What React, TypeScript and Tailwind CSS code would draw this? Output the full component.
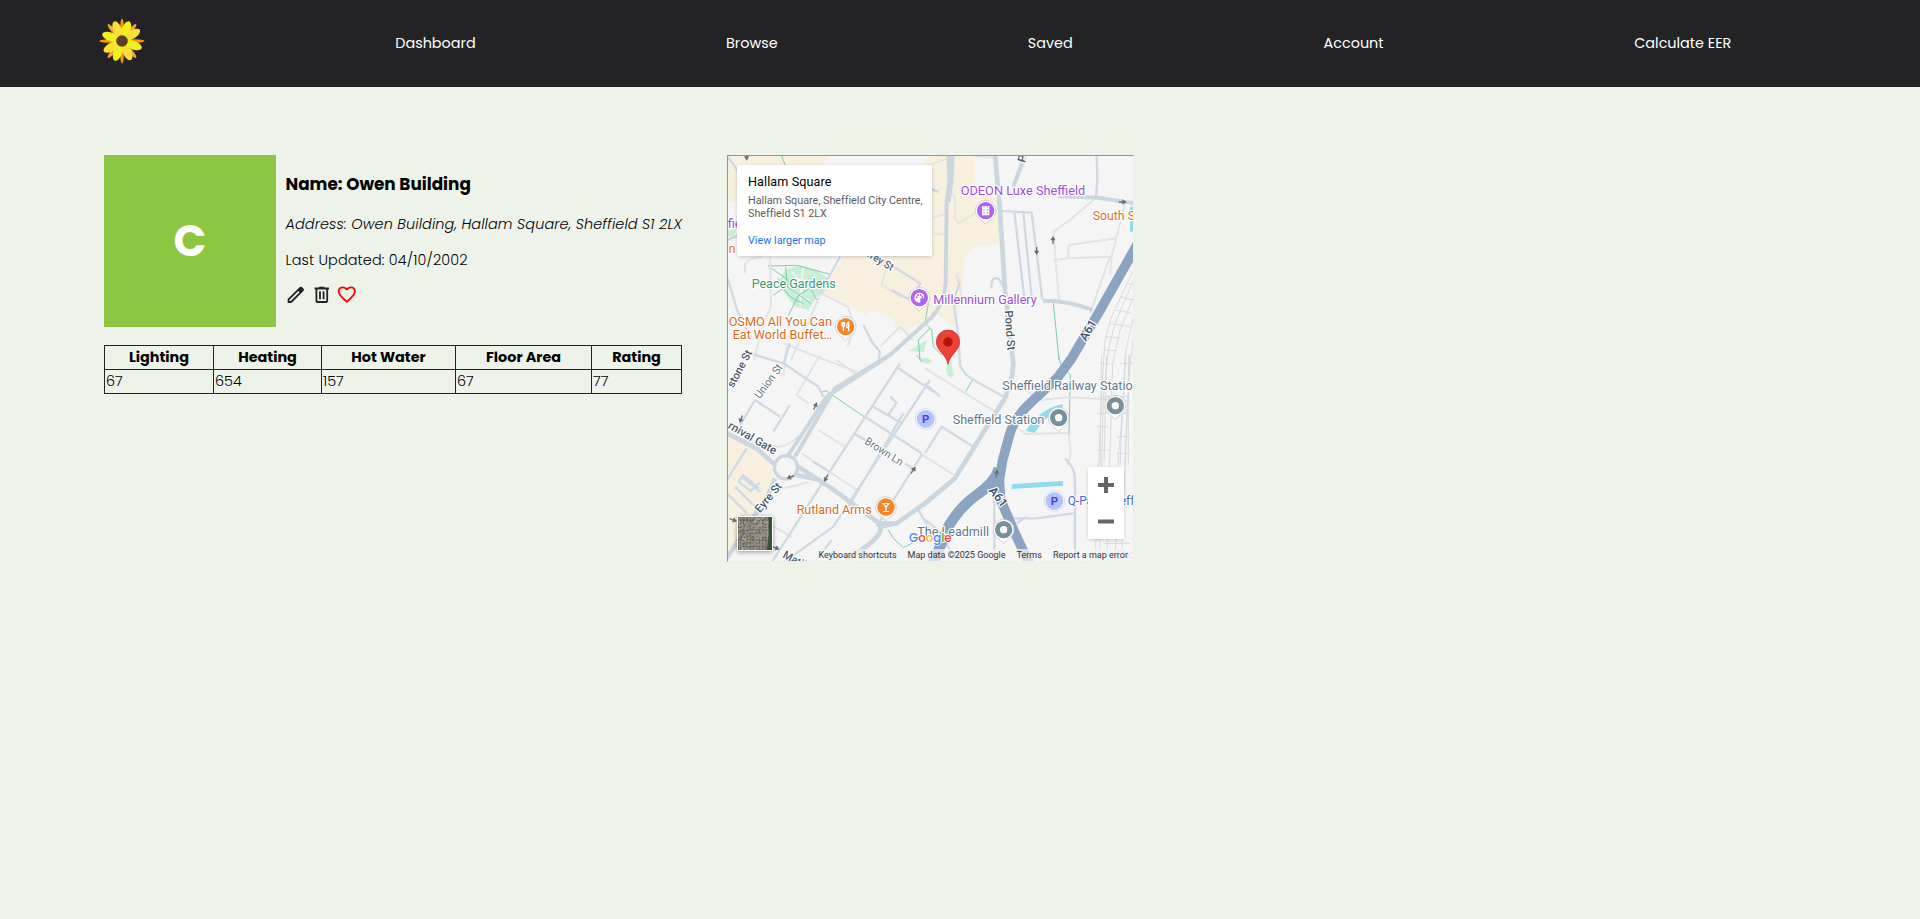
import React from 'react';

const EDIT =
  'M200-200h57l391-391-57-57-391 391v57Zm-80 80v-170l528-527q12-11 26.5-17t30.5-6q16 0 31 6t26 18l55 56q12 11 17.5 26t5.5 30q0 16-5.5 30.5T817-647L290-120H120Zm640-584-56-56 56 56Zm-141 85-28-29 57 57-29-28Z';
const TRASH =
  'M280-120q-33 0-56.5-23.5T200-200v-520h-40v-80h200v-40h240v40h200v80h-40v520q0 33-23.5 56.5T680-120H280Zm400-600H280v520h400v-520ZM360-280h80v-360h-80v360Zm160 0h80v-360h-80v360ZM280-720v520-520Z';
const HEART =
  'm480-120-58-52q-101-91-167-157T150-447.5Q111-500 95.5-544T80-634q0-94 63-157t157-63q52 0 99 22t81 62q34-40 81-62t99-22q94 0 157 63t63 157q0 46-15.5 90T810-447.5Q771-395 705-329T538-172l-58 52Zm0-108q96-86 158-147.5t98-107q36-45.5 50-81t14-70.5q0-60-40-100t-100-40q-47 0-87 26.5T518-680h-76q-15-41-55-67.5T300-774q-60 0-100 40t-40 100q0 35 14 70.5t50 81q36 45.5 98 107T480-228Z';

function Icon({ d, color }: { d: string; color: string }) {
  return (
    <svg viewBox="0 -960 960 960" className="h-[21.6px] w-[21.6px]" fill={color}>
      <path d={d} />
    </svg>
  );
}

function Flower() {
  return (
    <svg viewBox="-23 -23 46 46" className="block h-[46px] w-[46px]">
      {[40, 140, 220, 320].map((a) => (
        <ellipse key={a} cx="0" cy="-14.500" rx="2" ry="7.500" fill="#f7a03c" transform={`rotate(${a})`} />
      ))}
      {[0, 90, 180, 270].map((a) => (
        <ellipse key={a} cx="0" cy="-13" rx="1.800" ry="9.500" fill="#ff9500" transform={`rotate(${a})`} />
      ))}
      {[20, 65, 110, 155, 200, 245, 290, 335].map((a, i) => (
        <ellipse
          key={a}
          cx="0"
          cy="-12"
          rx="4.300"
          ry="9"
          fill={[1, 3, 5, 7].includes(i) ? '#fddf35' : '#f1f01e'}
          transform={`rotate(${[20, 58, 110, 155, 200, 240, 290, 338][i]})`}
        />
      ))}
      <circle r="5.800" fill="#5b4022" />
    </svg>
  );
}

const LINKS = [
  { label: 'Dashboard', cls: 'w-20' },
  { label: 'Browse', cls: 'w-[51px]' },
  { label: 'Saved', cls: 'w-[45px]' },
  { label: 'Account', cls: 'w-[60px]' },
  { label: 'Calculate EER', cls: 'w-[97px]' },
];

const COLUMNS = [
  { name: 'Lighting', value: '67', cls: 'w-[109px]' },
  { name: 'Heating', value: '654', cls: 'w-[108px]' },
  { name: 'Hot Water', value: '157', cls: 'w-[134px]' },
  { name: 'Floor Area', value: '67', cls: 'w-[136px]' },
  { name: 'Rating', value: '77', cls: 'w-[90px]' },
];

function Pin({ x, y, fill, children }: { x: number; y: number; fill: string; children?: React.ReactNode }) {
  return (
    <g transform={`translate(${x} ${y})`}>
      <path d="M-31 0a31 31 0 1 1 62 0c0 16-12 25-20 31l-11 10-11-10c-8-6-20-15-20-31z" fill="#fff" stroke="#b9bec4" strokeWidth="2" />
      <circle r="26" fill={fill} />
      {children}
    </g>
  );
}

function Label({ x, y, fill, size = 38, len, rotate = 0, weight = 400, children }: {
  x: number; y: number; fill: string; size?: number; len: number; rotate?: number; weight?: number; children: string;
}) {
  return (
    <text
      transform={`translate(${x} ${y}) rotate(${rotate})`}
      fill={fill}
      fontSize={size}
      fontWeight={weight}
      textLength={len}
      lengthAdjust="spacingAndGlyphs"
      stroke="#fff"
      strokeWidth="7"
      strokeLinejoin="round"
      paintOrder="stroke"
    >
      {children}
    </text>
  );
}

const ARROWS = [
  [950, 303, 180], [999, 270, 0], [1208, 156, 90], [286, 768, 25], [63, 808, 200], [211, 981, 250],
  [318, 985, 210], [580, 960, 35], [40, 1110, 110], [168, 1194, 110], [830, 970, 10], [80, 20, 180],
];

function MapDrawing() {
  return (
    <svg viewBox="21 15 1221 1221" className="absolute inset-0 h-full w-full font-['Roboto','Noto_Sans',sans-serif]">
      <rect x="0" y="0" width="1260" height="1260" fill="#f5f5f5" />
      <g fill="#f8f0df">
        <path d="M21 15H330L300 60 50 160 21 155z" />
        <path d="M380 310 630 15H763L765 110 835 150 843 280 755 295 733 330 727 420 702 530 636 485 610 520 535 548 518 508 455 480 440 496 303 430z" />
        <path d="M21 850 110 895 160 960 150 1020 110 1080 60 1140 40 1190 21 1200z" />
      </g>
      <g fill="#c7efd6">
        <path d="M195 360 240 345 290 360 325 385 315 425 290 440 265 480 225 470 195 430 175 400z" />
        <path d="M567 603 620 570 612 605z" />
        <path d="M600 625q30-5 35 10l-10 8-25-8z" />
        <path d="M683 640q12-30 12 10l7 22q-5 20-17 5-12-15-2-37z" />
        <path d="M21 240 50 238 40 260 21 258z" />
      </g>
      <g fill="none" stroke="#f5f5f5" strokeWidth="5">
        <path d="M200 400q40 50 70 50M215 365q30 40 70 40M250 345l-10 125" />
      </g>
      <g fill="none" stroke="#80cdb0" strokeWidth="3">
        <path d="M145 348l85-2 97 26M145 348l60 42 30 20M160 436l50-36M205 497l30-60 30-20M197 350l5 60 70 50M275 420l15 30M175 385q20 60 75 75" />
        <path d="M625 460l-10 60 20 20 5 50 25 25M600 630l-5-60 35-35M1000 458l17 172M1015 615l8 30 28 30-4 180M305 727q15-8 20 0l110 75M505 1140l15 25 30 28 30-15M737 725l22-38M590 615l15 20M185 18l12 30" />
      </g>
      <g fill="none" stroke="#e2e3e4" strokeWidth="6" strokeLinejoin="round">
        <path d="M75 370V345q5-20 50-24M150 320l3 150-30 70-20 90M303 430l-90 200M303 430l80 40 20 60-20 60M190 580l100 40 120 45M200 590l-10 90M300 615l-70 120 35 25M350 630l60 45M295 840l80 50M245 910l165 110M160 890q40 5 75-30M180 1015q50-5 85-20M160 1130l55 30" />
        <path d="M1120 150 1050 210 1000 245 1017 450M1045 285l145-20M1045 285v40l125-5-60 170M1000 330l45-5M1215 160l-40 160-5 55M615 655l210 130M890 700l70 50 85-8 185 10M897 835l20 17 130-3M1047 855l5 60-10 30M730 460l-20-90M480 590l60-60 40 40M600 910l110 70" />
      </g>
      <g fill="none" stroke="#dfe2e6" strokeWidth="4">
        <path d="M500 350l-15 55 60 38M690 130q15 0 15 20v55l10 15 50-30M615 50l70-25M640 250l40 5M620 210l60-20M763 18l60 5" />
      </g>
      <g fill="none" stroke="#d0dae4" strokeWidth="7" strokeLinejoin="round">
        <path d="M21 18q50 60 60 120l-15 100M21 380l30 100 45 90M360 320l-60 110M480 325l120 75q-15 50-40 45l-45-25M430 525l25 50 25 30-5 30" />
        <path d="M90 610l100 30 105 70 15 30M190 640l20-60M105 750 60 825M105 750l75 50M210 765l-50 80M21 990 80 895M95 1020l25-22M55 995l40 30M55 995l15-20 45 40M21 1030l60 60M45 1010l60 60M65 980l55 45" />
        <path d="M540 640 300 1010 150 1245M535 655l105 70M550 790 380 1080M435 800l170 110M400 850l45 25M555 940l30 20M460 770l85 50M505 795l25-37-20-18M280 935l45 28M630 690 340 1130 180 1245M605 915 470 1130M595 1080l35 60M275 1250l60-80" />
        <path d="M845 183l90 5 32 260M883 186l30 260M910 188l25 255M615 910l50-80 95 60M615 700l45 40M720 395l-20 60 15 100 5 90q10 30 50 50l90 50M1035 925q30 30 30 60v270M880 1105h70l110-15M823 1040v200M890 1120l30-20M615 1110q40 20 80 100" />
        <path d="M1130 18l2 65-4 58M813 415l4-25q15-15 26 8l15 25" />
      </g>
      <g fill="none" stroke="#cbd6df" strokeLinejoin="round">
        <g strokeWidth="14">
          <path d="M685 15l3 80-8 60-3 245q-5 60-40 100L510 615 345 715 225 920M698 15l-4 80-8 60" strokeWidth="12" />
          <path d="M500 622 320 740 205 915" strokeWidth="12" />
          <path d="M825 15l15 165 15 240 20 180 5 40-3 35-22 70-70 110-80 130-90 75-85 60-50 10" />
          <path d="M21 850 110 895 165 945M235 950l100 65 150 110M165 985l-20 50-60 90-65 100M230 975l70 15M470 1120h60M480 1125q10 30-50 70l-70 50" />
          <path d="M1015 138l120 5 105 17M968 452q80 0 150 28M915 15l-35 95" strokeWidth="12" />
          <path d="M21 270l50-20M615 110l40 15" strokeWidth="8" />
        </g>
        <circle cx="198" cy="952" r="35" fill="#f5f5f5" strokeWidth="10" />
      </g>
      <g fill="none" stroke="#d7dbdf" strokeWidth="3">
        <path d="M1238 365 1175 500 1155 570 1145 720 1125 1245M1239 395 1185 520 1165 600 1150 740 1138 1245M1245 430 1200 540 1178 640 1160 1245M1245 480 1218 600 1210 760 1195 920 1185 1245M1245 530 1230 640 1220 800 1205 1245M1145 615l-5 330M1160 615l-8 320M1215 615l-15 330M1230 615l-15 330M1225 615v330" />
        <path d="M1225 400l15 5M1200 440l35 10M1190 480l45 10M1170 520l60 10M1160 560l40 5M1150 600l35 2M1140 640l35 2M1200 640h40M1138 690h35M1135 740h35M1190 740h40M1132 790h35M1190 790h40M1130 830h35M1190 860h40M1128 900h35M1190 910h40M1150 1180h80M1140 1210h90" />
      </g>
      <g fill="#8fdcec">
        <path d="M918 842q40-65 110-80v10q-40 15-85 77z" />
        <path d="M877 1002l152-9v14l-155 10z" />
        <path d="M1230 170h12v75h-12z" />
      </g>
      <g fill="none" stroke="#8ba4c1" strokeWidth="29" strokeLinejoin="round">
        <path d="M1262 265 1135 490 1055 625 1015 680 935 755Q885 800 870 850L848 930 838 990 842 1050 885 1150 930 1245" />
        <path d="M837 955q-10 40-67 80-50 35-85 95l-50 120" strokeWidth="32" />
        <path d="M818 1000l15-20 5 65z" fill="#8ba4c1" strokeWidth="16" />
      </g>
      <g fill="#66707b">
        {ARROWS.map(([x, y, a], i) => (
          <path key={i} d="M0-12 8 1H2V12H-2V1H-8z" transform={`translate(${x} ${y}) rotate(${a})`} />
        ))}
      </g>

      <Label x={415} y={304} rotate={31} fill="#596674" size={32} weight={500} len={115}>urfrey St</Label>
      <Label x={95} y={413} fill="#3a9876" len={252}>Peace Gardens</Label>
      <Label x={23} y={235} fill="#9b4ddb" len={42}>fie</Label>
      <Label x={26} y={308} fill="#dc7126" len={20}>n</Label>
      <Label x={26} y={529} fill="#dc6a1c" len={310}>OSMO All You Can</Label>
      <Label x={38} y={567} fill="#dc6a1c" len={298}>Eat World Buffet…</Label>
      <Label x={722} y={136} fill="#9b4ddb" len={374}>ODEON Luxe Sheffield</Label>
      <Label x={640} y={462} fill="#9b4ddb" len={310}>Millennium Gallery</Label>
      <Label x={1118} y={211} fill="#dc7126" len={127}>South S</Label>
      <Label x={914} y={40} rotate={-72} fill="#4b5a6b" size={34} weight={500} len={42}>Po</Label>
      <Label x={854} y={482} rotate={86} fill="#4b5a6b" size={34} weight={500} len={120}>Pond St</Label>
      <Label x={1098} y={575} rotate={-60} fill="#43566f" size={36} weight={600} len={66}>A61</Label>
      <Label x={805} y={1022} rotate={52} fill="#43566f" size={36} weight={600} len={66}>A61</Label>
      <Label x={40} y={715} rotate={-62} fill="#4b5a6b" size={33} weight={500} len={122}>stone St</Label>
      <Label x={120} y={748} rotate={-54} fill="#6a737d" size={33} len={118}>Union St</Label>
      <Label x={22} y={833} rotate={30} fill="#4b5a6b" size={34} weight={500} len={162}>rnival Gate</Label>
      <Label x={120} y={1090} rotate={-50} fill="#4b5a6b" size={34} weight={500} len={105}>Eyre St</Label>
      <Label x={432} y={880} rotate={32} fill="#6a737d" size={33} len={128}>Brown Ln</Label>
      <Label x={186} y={1222} rotate={28} fill="#4b5a6b" size={34} weight={500} len={108}>Matilda</Label>
      <Label x={847} y={720} fill="#60798a" len={391}>Sheffield Railway Statio</Label>
      <Label x={698} y={821} fill="#60798a" len={275}>Sheffield Station</Label>
      <Label x={592} y={1157} fill="#60798a" len={215}>The Leadmill</Label>
      <Label x={1043} y={1066} fill="#4565ea" len={200}>Q-Park Sheff</Label>
      <Label x={230} y={1091} fill="#dc6a1c" len={225}>Rutland Arms</Label>
      <Label x={1187} y={1226} fill="#d2b0ef" len={60}>Cho</Label>

      <Pin x={797} y={182} fill="#b163f5">
        <path d="M-11-14h22v28h-22z" fill="#fff" />
        <path d="M-5-14v28M5-14v28" stroke="#b163f5" strokeWidth="2.500" strokeDasharray="5 4" />
      </Pin>
      <Pin x={598} y={443} fill="#b163f5">
        <path d="M0-15a15 15 0 1 0 0 30q6-3 2-9 0-4 6-4h6q3-17-14-17z" fill="#fff" />
        <g fill="#b163f5"><circle cx="-8" cy="-1" r="3" /><circle cx="-4" cy="-8" r="3" /><circle cx="4" cy="-8" r="3" /><circle cx="9" cy="-2" r="3" /></g>
      </Pin>
      <Pin x={377} y={530} fill="#fa8526">
        <path d="M-11-14v9q0 5 4 5v14M-4-14v9q0 5-3 5M-7-14v10M9 14v-28q-7 5-6 17h6" fill="none" stroke="#fff" strokeWidth="4" />
      </Pin>
      <Pin x={498} y={1071} fill="#fa8526">
        <path d="M-13-12h26L2 1v11h7v3H-9v-3h7V1z" fill="#fff" />
        <path d="M-5-8H5L0-3z" fill="#fa8526" />
      </Pin>
      {[[1016, 803], [1186, 767], [851, 1139]].map(([x, y]) => (
        <Pin key={x} x={x} y={y} fill="#78909c"><circle r="11" fill="#fff" /></Pin>
      ))}
      {[[617, 807], [1003, 1053]].map(([x, y]) => (
        <g key={x} transform={`translate(${x} ${y})`}>
          <circle r="31" fill="#fff" stroke="#c5cad3" strokeWidth="2" />
          <circle r="27" fill="#b3c3ff" />
          <text y="12" fontSize="34" fontWeight="700" textAnchor="middle" fill="#4a3df0">P</text>
        </g>
      ))}
      <path d="M684 643C680 614 649 604 649 575a35 35 0 1 1 70 0c0 29-31 39-35 68z" fill="#ea4335" stroke="#c5221f" strokeWidth="2" />
      <circle cx="684" cy="576" r="14" fill="#b31412" />
      <text x="567" y="1176" className="font-['Poppins','Inter',sans-serif]" fontSize="38" fontWeight="500" textLength="128" lengthAdjust="spacingAndGlyphs" stroke="#fff" strokeWidth="5" paintOrder="stroke">
        <tspan fill="#4285f4">G</tspan><tspan fill="#ea4335">o</tspan><tspan fill="#fbbc04">o</tspan><tspan fill="#4285f4">g</tspan><tspan fill="#34a853">l</tspan><tspan fill="#ea4335">e</tspan>
      </text>
    </svg>
  );
}

const TONES = ['#6d6558', '#85796b', '#5d6350', '#9c9184', '#756a62', '#5a5a4c', '#8f8577'];

function Satellite() {
  let seed = 41;
  const cells = Array.from({ length: 529 }, () => {
    seed = (seed * 16807) % 2147483647;
    return TONES[seed % 7];
  });
  return (
    <svg viewBox="0 0 34.500 34.500" preserveAspectRatio="none" className="block h-full w-full">
      {cells.map((tone, i) => (
        <rect key={i} x={(i % 23) * 1.5} y={Math.floor(i / 23) * 1.5} width="1.600" height="1.600" fill={tone} />
      ))}
      <path d="M31 0h4v35h-6l2-14z" fill="#3a5238" />
    </svg>
  );
}

function MapPanel() {
  return (
    <div className="relative h-[407px] w-[407px] shrink-0 overflow-hidden font-['Roboto','Noto_Sans',sans-serif]">
      <MapDrawing />
      <div className="absolute top-[10px] left-[10px] h-[91px] w-[195px] rounded-[2px] bg-white pt-[9px] pl-[11px] whitespace-nowrap shadow-[0_1px_4px_-1px_rgba(0,0,0,0.3)]">
        <div className="text-[12.6px] leading-4 tracking-[0.1px] text-black">Hallam Square</div>
        <div className="mt-[4px] text-[10.8px] leading-[13px] tracking-[-0.02px] text-[#5b5b5b]">
          Hallam Square, Sheffield City Centre,
          <br />
          Sheffield S1 2LX
        </div>
        <div className="mt-[14px] text-[10.8px] leading-[13px] text-[#1a73e8]">View larger map</div>
      </div>
      <div className="absolute top-[361px] left-[10px] h-[35px] w-[36px] rounded-[2px] border border-white shadow-[0_1px_4px_rgba(0,0,0,0.4)]">
        <Satellite />
      </div>
      <div className="absolute top-[312px] left-[361px] flex h-[72px] w-9 flex-col bg-white shadow-[0_1px_4px_-1px_rgba(0,0,0,0.3)]">
        <svg viewBox="0 0 36 72" className="h-full w-full" stroke="#666" strokeWidth="4">
          <path d="M10 18h16M18 10v16M10 54.500h16" />
        </svg>
      </div>
      <div className="absolute right-0 bottom-0 flex h-[13px] items-center gap-[11px] bg-[#f5f5f5]/70 pr-[6px] pl-1 text-[9px] whitespace-nowrap text-[#333]">
        <span>Keyboard shortcuts</span>
        <span>Map data ©2025 Google</span>
        <span>Terms</span>
        <span>Report a map error</span>
      </div>
      <div className="pointer-events-none absolute inset-0 border border-t-[#949494] border-r-[#eeeeee] border-b-[#eeeeee] border-l-[#949494]" />
    </div>
  );
}

export default function App() {
  return (
    <div className="min-h-[919px] bg-[#edf3e8] font-['Poppins','Inter',sans-serif] text-black">
      <nav className="flex h-[87px] items-center gap-[250.75px] bg-[#232325] pb-[2px] pl-[98.5px] whitespace-nowrap text-white">
        <div className="-mt-1 w-[46px]">
          <Flower />
        </div>
        {LINKS.map((l) => (
          <a key={l.label} className={`text-[14.4px] leading-5 ${l.cls}`}>
            {l.label}
          </a>
        ))}
      </nav>
      <main className="flex items-start gap-[45px] pt-[68px] pl-[104px]">
        <section className="w-[578px]">
          <div className="flex gap-[9px]">
            <div className="flex h-[172px] w-[172px] shrink-0 items-center justify-center bg-[#8dc641] pt-px text-[43.2px] leading-none font-bold text-white">
              C
            </div>
            <div className="pt-[17px] whitespace-nowrap">
              <h3 className="ml-[0.5px] text-[16.85px] leading-6 font-bold">Name: Owen Building</h3>
              <p className="mt-[17px] ml-[0.5px] text-[14.4px] leading-[22px] font-light italic tracking-[0.13px]">
                Address: Owen Building, Hallam Square, Sheffield S1 2LX
              </p>
              <p className="mt-[14px] ml-[0.5px] text-[14.4px] leading-[22px] font-light tracking-[0.14px]">
                Last Updated: 04/10/2002
              </p>
              <div className="mt-[13px] flex gap-[4px]">
                <Icon d={EDIT} color="#232325" />
                <Icon d={TRASH} color="#232325" />
                <Icon d={HEART} color="#ff0000" />
              </div>
            </div>
          </div>
          <table className="mt-[18px] w-[578px] table-fixed border-collapse text-[14.4px] leading-[22px]">
            <thead>
              <tr className="h-6">
                {COLUMNS.map((c) => (
                  <th key={c.name} className={`border border-[#232325] p-0 pb-px text-center leading-[21px] font-bold ${c.cls}`}>
                    {c.name}
                  </th>
                ))}
              </tr>
            </thead>
            <tbody>
              <tr className="h-6">
                {COLUMNS.map((c) => (
                  <td key={c.name} className="border border-[#232325] p-0 pb-px pl-px leading-[21px] font-light">
                    {c.value}
                  </td>
                ))}
              </tr>
            </tbody>
          </table>
        </section>
        <MapPanel />
      </main>
    </div>
  );
}
